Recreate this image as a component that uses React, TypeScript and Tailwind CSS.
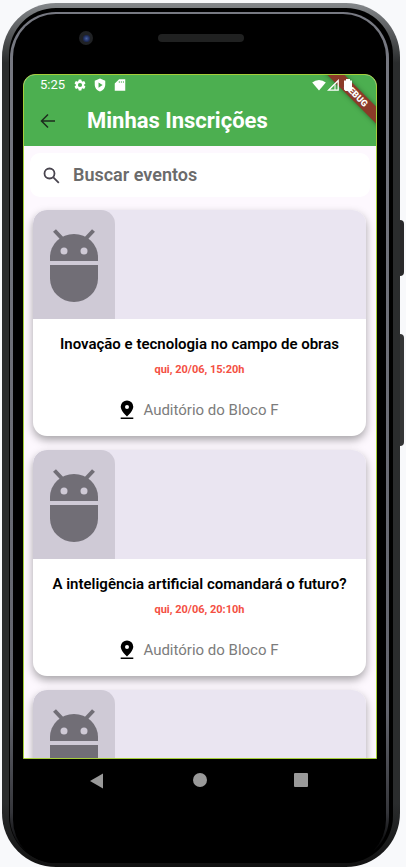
import React from "react";

type Event = { id: number; title: string; date: string; place: string };

const events: Event[] = [
  { id: 1, title: "Inovação e tecnologia no campo de obras", date: "qui, 20/06, 15:20h", place: "Auditório do Bloco F" },
  { id: 2, title: "A inteligência artificial comandará o futuro?", date: "qui, 20/06, 20:10h", place: "Auditório do Bloco F" },
  { id: 3, title: "", date: "", place: "" },
];

function Robot() {
  return (
    <svg viewBox="0 0 48 73" className="h-[73px] w-12" aria-hidden="true">
      <path d="M4.500 1.500 12 9.500M43.500 1.500 36 9.500" stroke="#716e76" strokeWidth="4" />
      <path d="M0 32v-4a24 23 0 0 1 48 0v4z" fill="#716e76" />
      <path d="M0 36h48v13.500a24 23.500 0 0 1-48 0z" fill="#716e76" />
      <circle cx="14" cy="22" r="3.500" fill="#cfcad6" />
      <circle cx="34" cy="22" r="3.500" fill="#cfcad6" />
    </svg>
  );
}

function EventCard({ event }: { event: Event }) {
  return (
    <article className="shrink-0 overflow-hidden rounded-[14px] bg-white shadow-[0_4px_8px_rgba(0,0,0,0.34)]">
      <div className="h-[109px] bg-[#eae5f1]">
        <div className="flex h-full w-[82px] items-center justify-center rounded-t-[14px] bg-[#cfcad6] pt-0.5">
          <Robot />
        </div>
      </div>
      {event.title && (
        <div className="flex flex-col items-center pt-[15px] pb-[14px]">
          <h2 className="text-[15px] leading-5 font-semibold whitespace-nowrap text-black">{event.title}</h2>
          <p className="mt-2 text-[11px] leading-4 font-bold text-[#f44f43]">{event.date}</p>
          <p className="mt-5 flex items-center gap-[9px] text-[15px] leading-6 text-[#7c7c7c]">
            <svg viewBox="0 0 14 20" className="h-5 w-[14px]" aria-hidden="true">
              <path fillRule="evenodd" d="M7 .500a6.300 6.300 0 0 0-6.300 6.300c0 4.200 6.300 9.700 6.300 9.700s6.300-5.500 6.300-9.700A6.300 6.300 0 0 0 7 .500zm0 4.500a2 2 0 1 1 0 4 2 2 0 0 1 0-4z" fill="#000" />
              <path d="M.7 17.500h12.600V19H.7z" fill="#000" />
            </svg>
            {event.place}
          </p>
        </div>
      )}
    </article>
  );
}

function StatusBar() {
  return (
    <div className="relative z-10 flex h-5 items-center pr-6 pl-4 text-white">
      <span className="text-[13px] leading-5">5:25</span>
      <svg viewBox="0 0 24 24" className="ml-2 h-[14px] w-[14px]" fill="currentColor" aria-hidden="true">
        <path d="M19.140 12.940a7 7 0 0 0 0-1.880l2.030-1.580a.5.5 0 0 0 .12-.61l-1.920-3.320a.5.5 0 0 0-.59-.22l-2.390.96a7 7 0 0 0-1.620-.94l-.36-2.540a.5.5 0 0 0-.48-.41h-3.840a.5.5 0 0 0-.47.41l-.36 2.540a7 7 0 0 0-1.620.94l-2.390-.96a.5.5 0 0 0-.59.220L2.740 8.870a.5.5 0 0 0 .12.610l2.030 1.580a7 7 0 0 0 0 1.880l-2.030 1.580a.5.5 0 0 0-.12.610l1.920 3.320c.12.220.37.290.59.220l2.390-.96c.5.380 1.030.7 1.620.94l.36 2.540c.05.240.24.410.48.410h3.840c.24 0 .44-.17.47-.41l.36-2.540a7 7 0 0 0 1.620-.94l2.390.96c.22.080.47 0 .59-.22l1.920-3.320a.5.5 0 0 0-.12-.61zM12 15.600a3.600 3.600 0 1 1 0-7.200 3.600 3.600 0 0 1 0 7.200z" />
      </svg>
      <svg viewBox="0 0 24 24" className="ml-[6px] h-[14px] w-[14px]" fill="currentColor" aria-hidden="true">
        <path fillRule="evenodd" d="M12 1 3 4.500V11c0 5.600 3.800 10.700 9 12 5.200-1.300 9-6.400 9-12V4.500zM9.500 7.500 16.500 12l-7 4.500z" />
      </svg>
      <svg viewBox="0 0 24 24" className="ml-[6px] h-[14px] w-[14px]" fill="currentColor" aria-hidden="true">
        <path fillRule="evenodd" d="M20 2h-9.500L3 9.500V22h18V2zM10 8V5.500h1.500V8zm3.500 0V5.500H15V8zm3.500 0V5.500h1.500V8z" />
      </svg>
      <svg viewBox="0 0 14 12" className="ml-auto h-3 w-[14px]" fill="currentColor" aria-hidden="true">
        <path d="M.2 3.500a10.500 10.500 0 0 1 13.600 0L7 11.500z" />
      </svg>
      <svg viewBox="0 0 12 12" className="ml-px h-3 w-3" aria-hidden="true">
        <path d="M11.200 1.500v9.700H1.500z" fill="none" stroke="#fff" strokeWidth="1.300" />
        <path d="M8 5.500v5.500" stroke="#fff" strokeWidth="1" />
      </svg>
      <svg viewBox="0 0 8 12" className="ml-[5px] h-3 w-2" fill="currentColor" aria-hidden="true">
        <path d="M2 0h4v1.500h2V10.500L6.500 12h-5L0 10.500v-9h2z" />
      </svg>
    </div>
  );
}

export default function App() {
  return (
    <div className="flex h-screen bg-[#f8f9fb] pt-[3px] pr-[6px] pl-[2px] font-[Roboto,'Liberation_Sans',sans-serif]">
      <div className="relative flex min-w-0 flex-1 flex-col rounded-[54px] bg-[linear-gradient(180deg,#85888b_0,#2a2c2d_60px,#2a2c2d_800px,#111_100%)] px-[7px] pt-[5px] pb-1">
        <span className="absolute top-[217px] -right-[4px] h-14 w-1 rounded-r-sm bg-[#29292a]" />
        <span className="absolute top-[331px] -right-[4px] h-[112px] w-1 rounded-r-sm bg-[#343536]" />
        <div className="flex min-h-0 flex-1 flex-col rounded-[47px] bg-black pt-1 pr-1 pl-px">
          <div className="flex min-h-0 flex-1 flex-col rounded-[46px] bg-[linear-gradient(180deg,#777982_0,#62646d_700px,#35363b_800px,#000_840px)] px-[3px] pt-[2px]">
            <div className="flex min-h-0 flex-1 flex-col rounded-[43px] bg-black pr-[9px] pl-[10px]">
              <div className="relative h-[60px] shrink-0">
                <span className="absolute top-[17px] left-[56px] flex size-[14px] items-center justify-center rounded-full bg-[#202225]">
                  <span className="size-[7px] rounded-full bg-[radial-gradient(circle,#465f9f_0,#1d2a58_60%)]" />
                </span>
                <span className="absolute top-5 left-1/2 ml-[-42px] h-2 w-[86px] rounded-full bg-[#202121]" />
              </div>
              <div className="relative flex min-h-0 flex-1 flex-col overflow-hidden rounded-t-[12px] border border-[#a5ce3a] bg-[#fdf8fe]">
                <header className="shrink-0 bg-[#4caf50] text-white">
                  <StatusBar />
                  <div className="flex h-[51px] items-center pl-4">
                    <button aria-label="Voltar" className="text-[#1c2b1d]">
                      <svg viewBox="0 0 16 16" className="size-4" fill="none" stroke="currentColor" strokeWidth="1.500" aria-hidden="true">
                        <path d="M15 8H2M8 1.500 1.500 8 8 14.500" />
                      </svg>
                    </button>
                    <h1 className="ml-[31px] text-[22px] leading-7 font-bold">Minhas Inscrições</h1>
                  </div>
                </header>
                <main className="flex min-h-0 flex-1 flex-col overflow-y-auto px-[6px] pt-[7px] [scrollbar-width:none]">
                  <label className="flex h-11 shrink-0 items-center rounded-[10px] bg-white pl-[13px]">
                    <svg viewBox="0 0 17 17" className="size-[17px] shrink-0" fill="none" stroke="#49454f" strokeWidth="1.800" aria-hidden="true">
                      <circle cx="6.500" cy="6.500" r="5" />
                      <path d="m10.300 10.300 5.500 5.500" />
                    </svg>
                    <input aria-label="Buscar eventos" placeholder="Buscar eventos" className="ml-[13px] min-w-0 flex-1 bg-transparent text-lg font-semibold outline-none placeholder:text-[#6b6b6b]" />
                  </label>
                  <div className="mt-[13px] flex flex-col gap-[14px] pr-1 pl-[3px]">
                    {events.map((e) => (
                      <EventCard key={e.id} event={e} />
                    ))}
                  </div>
                </main>
                <div className="absolute top-[14px] -right-[28px] w-[96px] rotate-45 bg-[#8b3a28] text-center text-[9px] leading-[12px] font-black text-white shadow-[0_0_5px_rgba(0,0,0,0.4)]">
                  DEBUG
                </div>
              </div>
              <nav className="flex h-[104px] shrink-0 justify-between pt-[14px] pr-[69px] pl-[66px]">
                <button aria-label="Voltar à tela anterior" className="size-4">
                  <svg viewBox="0 0 16 16" className="size-4" fill="#999" aria-hidden="true"><path d="M14 .500v15L1 8z" /></svg>
                </button>
                <button aria-label="Início" className="size-[14px] rounded-full bg-[#999]" />
                <button aria-label="Recentes" className="size-[14px] rounded-[1px] bg-[#999]" />
              </nav>
            </div>
          </div>
        </div>
      </div>
    </div>
  );
}
